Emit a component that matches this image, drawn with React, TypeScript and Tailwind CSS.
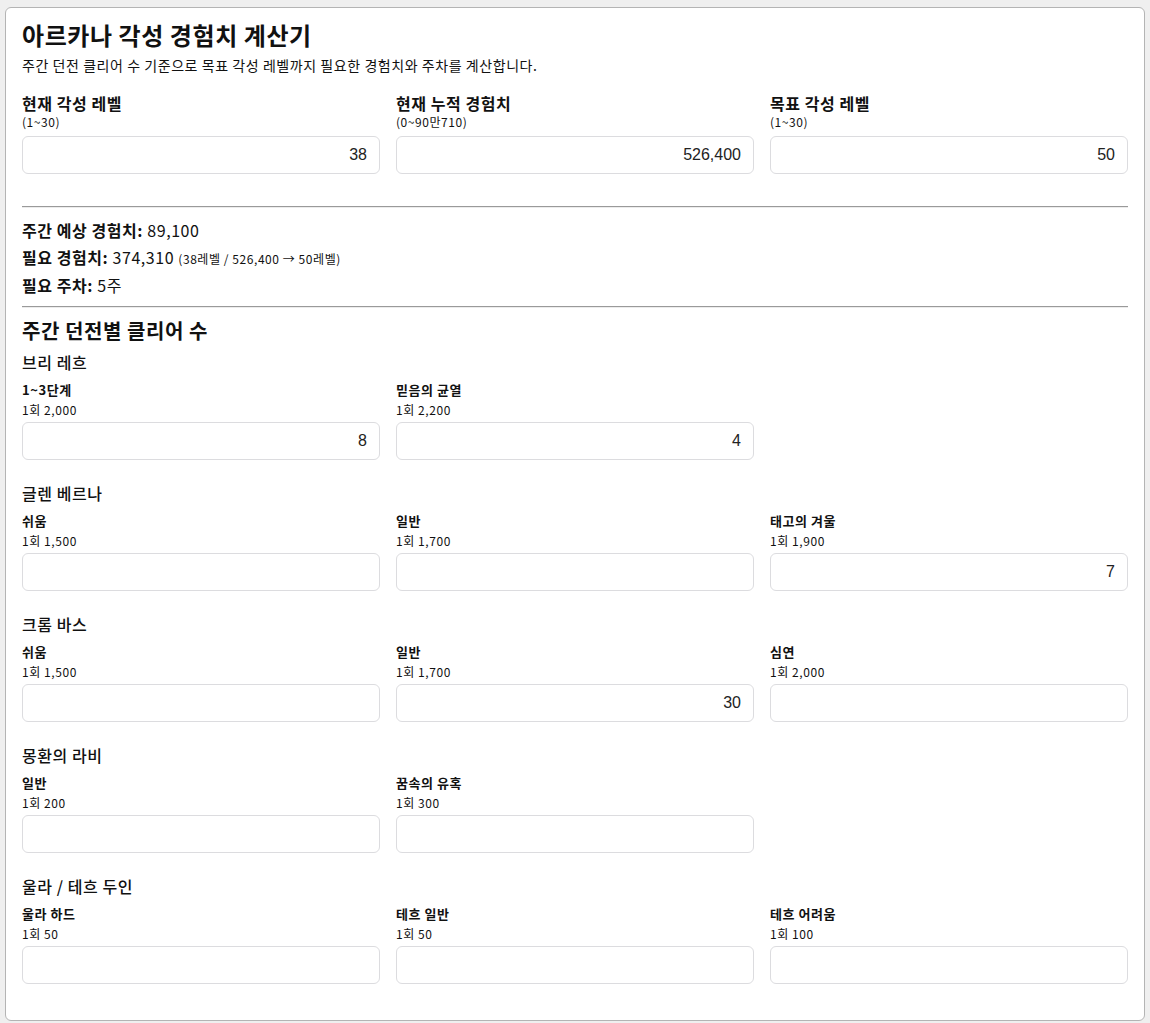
import { useState } from 'react'

type Dungeon = { key: string; name: string; exp: number }
type Group = { title: string; items: Dungeon[] }

const groups: Group[] = [
  {
    title: '브리 레흐',
    items: [
      { key: 'bri1', name: '1~3단계', exp: 2000 },
      { key: 'bri2', name: '믿음의 균열', exp: 2200 },
    ],
  },
  {
    title: '글렌 베르나',
    items: [
      { key: 'glen1', name: '쉬움', exp: 1500 },
      { key: 'glen2', name: '일반', exp: 1700 },
      { key: 'glen3', name: '태고의 겨울', exp: 1900 },
    ],
  },
  {
    title: '크롬 바스',
    items: [
      { key: 'crom1', name: '쉬움', exp: 1500 },
      { key: 'crom2', name: '일반', exp: 1700 },
      { key: 'crom3', name: '심연', exp: 2000 },
    ],
  },
  {
    title: '몽환의 라비',
    items: [
      { key: 'rabi1', name: '일반', exp: 200 },
      { key: 'rabi2', name: '꿈속의 유혹', exp: 300 },
    ],
  },
  {
    title: '울라 / 테흐 두인',
    items: [
      { key: 'ula1', name: '울라 하드', exp: 50 },
      { key: 'teh1', name: '테흐 일반', exp: 50 },
      { key: 'teh2', name: '테흐 어려움', exp: 100 },
    ],
  },
]

const fmt = (n: number) => n.toLocaleString('en-US')

const inputClass =
  'block w-full h-[38px] rounded-md border border-[#dcdcdf] bg-white px-3 text-right text-[16px] tracking-normal text-[#222] font-["Liberation_Sans",Arial,sans-serif] outline-none'

export default function App() {
  const [level, setLevel] = useState('38')
  const [exp, setExp] = useState('526,400')
  const [target, setTarget] = useState('50')
  const [counts, setCounts] = useState<Record<string, string>>({
    bri1: '8',
    bri2: '4',
    glen3: '7',
    crom2: '30',
  })

  const weekly = groups
    .flatMap((g) => g.items)
    .reduce((sum, d) => sum + (Number(counts[d.key] || 0) * d.exp), 0)

  return (
    <div className="min-h-screen bg-[#efefef] px-[5px] pt-[7px] font-['Noto_Sans_CJK_KR','Noto_Sans',sans-serif] tracking-[0.035em] text-[#111]">
      <div className="h-[1014px] rounded-md border border-[#b4b4b4] bg-white px-4 pt-[11px]">
        <h1 className="text-[24px] font-bold leading-[32px]">아르카나 각성 경험치 계산기</h1>
        <p className="mt-[4px] text-[14px] leading-[20px]">
          주간 던전 클리어 수 기준으로 목표 각성 레벨까지 필요한 경험치와 주차를 계산합니다.
        </p>

        {/* 입력 */}
        <div className="mt-[17px] grid grid-cols-3 gap-4">
          <div>
            <div className="text-[16px] font-semibold leading-[22px]">현재 각성 레벨</div>
            <div className="text-[12px] leading-[16px]">(1~30)</div>
            <input className={inputClass + ' mt-[6px]'} value={level} onChange={(e) => setLevel(e.target.value)} />
          </div>
          <div>
            <div className="text-[16px] font-semibold leading-[22px]">현재 누적 경험치</div>
            <div className="text-[12px] leading-[16px]">(0~90만710)</div>
            <input className={inputClass + ' mt-[6px]'} value={exp} onChange={(e) => setExp(e.target.value)} />
          </div>
          <div>
            <div className="text-[16px] font-semibold leading-[22px]">목표 각성 레벨</div>
            <div className="text-[12px] leading-[16px]">(1~30)</div>
            <input className={inputClass + ' mt-[6px]'} value={target} onChange={(e) => setTarget(e.target.value)} />
          </div>
        </div>

        <hr className="mt-[32px] border-t border-b border-t-[#9a9a9a] border-b-[#ececec]" />

        {/* 결과 */}
        <div className="mt-[9px] mb-[7px] text-[16px] leading-[27px]">
          <div>
            <span className="font-semibold">주간 예상 경험치:</span> {fmt(weekly)}
          </div>
          <div>
            <span className="font-semibold">필요 경험치:</span> 374,310{' '}
            <span className="text-[12px]">(38레벨 / 526,400 → 50레벨)</span>
          </div>
          <div>
            <span className="font-semibold">필요 주차:</span> 5주
          </div>
        </div>

        <hr className="border-t border-b border-t-[#9a9a9a] border-b-[#ececec]" />

        <h2 className="mt-[9px] text-[20px] font-bold leading-[28px]">주간 던전별 클리어 수</h2>

        {groups.map((g, gi) => (
          <div key={g.title} className={gi === 0 ? 'mt-[5px]' : 'mt-[21px]'}>
            <h3 className="text-[16px] font-medium leading-[24px]">{g.title}</h3>
            <div className="mt-[6px] grid grid-cols-3 gap-4">
              {g.items.map((d) => (
                <div key={d.key}>
                  <div className="text-[13px] font-semibold leading-[20px]">{d.name}</div>
                  <div className="mt-[2px] text-[12px] leading-[16px]">1회 {fmt(d.exp)}</div>
                  <input
                    className={inputClass + ' mt-[4px]'}
                    value={counts[d.key] || ''}
                    onChange={(e) => setCounts({ ...counts, [d.key]: e.target.value })}
                  />
                </div>
              ))}
            </div>
          </div>
        ))}
      </div>
    </div>
  )
}
